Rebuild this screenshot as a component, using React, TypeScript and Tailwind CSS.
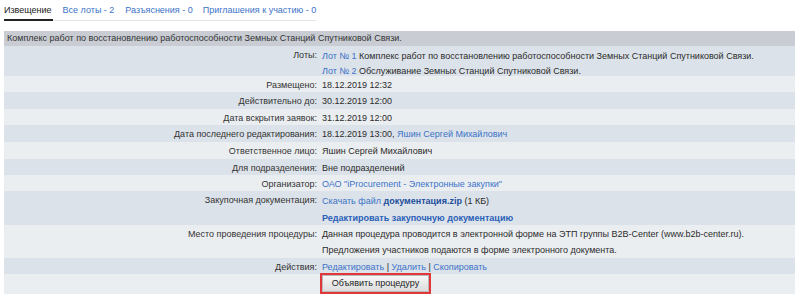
import React from "react";

const link = "text-[#3b73c8]";

const Row = ({
  label,
  dark,
  h,
  children,
}: {
  label: string;
  dark?: boolean;
  h: string;
  children?: React.ReactNode;
}) => (
  <div className={`flex ${h} ${dark ? "bg-[#dce2e9]" : "bg-[#ebeef1]"}`}>
    <div className="w-[316px] shrink-0 pr-[3px] pt-[1px] text-right text-[#333]">{label}</div>
    <div className="flex-1 pl-[2px] pt-[1px] text-[#2b2b2b]">{children}</div>
  </div>
);

export default function App() {
  return (
    <div className="w-[800px] h-[297px] bg-white text-[9px] leading-[16px] whitespace-nowrap font-['Liberation_Sans',Arial,sans-serif]">
      <div className="pl-[4px] pt-[1px]">
        <div className="flex w-[312px] border-b border-[#e3e5e8] h-[20px]">
          <div className="border-b-2 border-[#222] h-[20px] text-[#222] pt-[1px] pr-[1px]">Извещение</div>
          <div className={`${link} ml-[10px] pt-[1px]`}>Все лоты - 2</div>
          <div className={`${link} ml-[11px] pt-[1px]`}>Разъяснения - 0</div>
          <div className={`${link} ml-[10px] pt-[1px]`}>Приглашения к участию - 0</div>
        </div>
      </div>
      <div className="mx-[4px] mt-[10px] w-[791px]">
        <div className="h-[15px] bg-[#c9cdd3] pl-[3px] leading-[15px] text-[#333]">
          Комплекс работ по восстановлению работоспособности Земных Станций Спутниковой Связи.
        </div>
        <Row label="Лоты:" dark h="h-[30px]">
          <div className="leading-[15px] pt-[2px]">
            <div>
              <span className={link}>Лот № 1</span> Комплекс работ по восстановлению работоспособности Земных Станций Спутниковой Связи.
            </div>
            <div>
              <span className={link}>Лот № 2</span> Обслуживание Земных Станций Спутниковой Связи.
            </div>
          </div>
        </Row>
        <Row label="Размещено:" h="h-[16px]">18.12.2019 12:32</Row>
        <Row label="Действительно до:" dark h="h-[17px]">30.12.2019 12:00</Row>
        <Row label="Дата вскрытия заявок:" h="h-[16px]">31.12.2019 12:00</Row>
        <Row label="Дата последнего редактирования:" dark h="h-[17px]">
          18.12.2019 13:00, <span className={link}>Яшин Сергей Михайлович</span>
        </Row>
        <Row label="Ответственное лицо:" h="h-[17px]">Яшин Сергей Михайлович</Row>
        <Row label="Для подразделения:" dark h="h-[16px]">Вне подразделений</Row>
        <Row label="Организатор:" h="h-[16px]">
          <span className={link}>ОАО "iProcurement - Электронные закупки"</span>
        </Row>
        <Row label="Закупочная документация:" dark h="h-[34px]">
          <div className="pt-[1px]">
            <span className={link}>Скачать файл </span>
            <span className="font-bold text-[#1e4f9e]">документация.zip</span> (1 КБ)
          </div>
          <div className="mt-[1px] font-bold text-[#2a60b8]">Редактировать закупочную документацию</div>
        </Row>
        <Row label="Место проведения процедуры:" h="h-[33px]">
          <div>
            Данная процедура проводится в электронной форме на ЭТП группы B2B-Center (www.b2b-center.ru).
          </div>
          <div>Предложения участников подаются в форме электронного документа.</div>
        </Row>
        <Row label="Действия:" dark h="h-[16px]">
          <span className={link}>Редактировать</span> | <span className={link}>Удалить</span> |{" "}
          <span className={link}>Скопировать</span>
        </Row>
        <div className="flex h-[20px] bg-[#ebeef1]">
          <div className="w-[316px] shrink-0" />
          <div className="border-2 border-[#e2373a] h-[21px] -mt-[1px]">
            <button className="h-[17px] w-[107px] border border-[#b9b9b9] bg-gradient-to-b from-[#f7f7f7] to-[#dddddd] text-[9px] leading-[15px] text-[#222]">
              Объявить процедуру
            </button>
          </div>
        </div>
      </div>
    </div>
  );
}
